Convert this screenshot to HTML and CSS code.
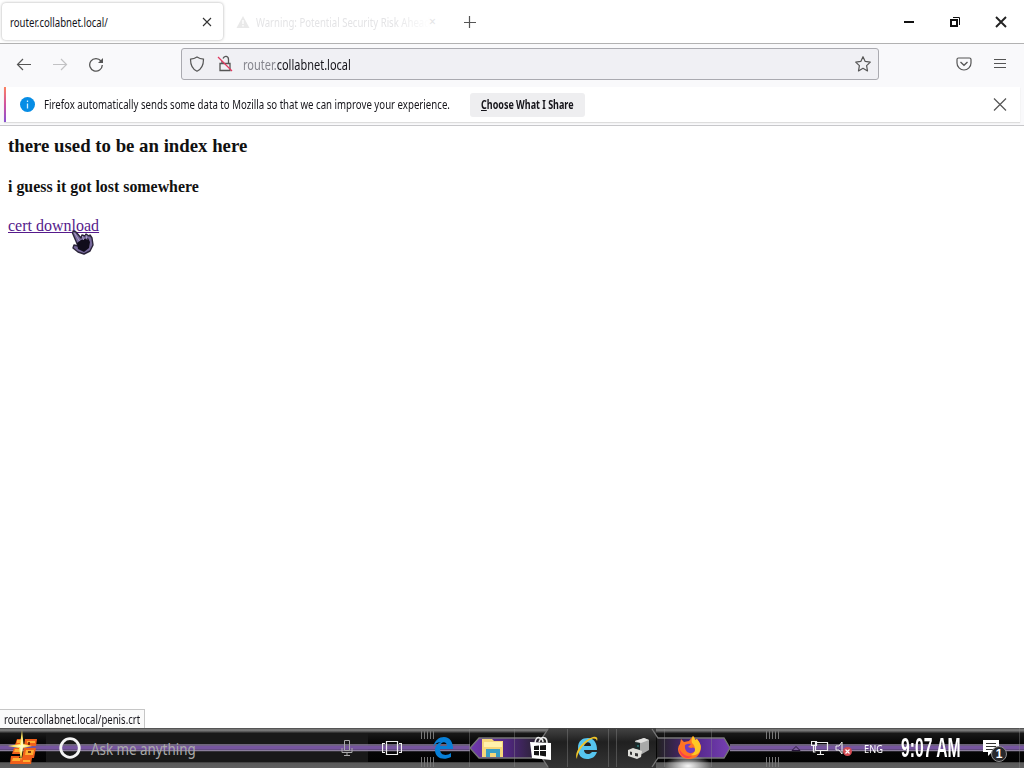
FILE: index.html
```html
<!DOCTYPE html>
<html lang="en">
<head>
<meta charset="utf-8">
<title>router.collabnet.local/</title>
<link rel="stylesheet" href="styles.css">
</head>
<body>
<div class="screen">
  <header class="tabs">
    <div class="tab"><span class="label tab-title">router.collabnet.local/</span>
      <svg class="tab-close" width="10" height="10" viewBox="0 0 10 10"><path d="M1 1l8 8M9 1L1 9" stroke="#333" stroke-width="1.1"/></svg>
    </div>
    <div class="ghost-tab">
      <svg width="14" height="14" viewBox="0 0 14 14"><path d="M7 1L13.5 13H.5z" fill="#e9e9e9"/><path d="M7 5v4M7 10v1.5" stroke="#fff" stroke-width="1.3"/></svg>
      <span class="label ghost-title">Warning: Potential Security Risk Ahead</span><span class="ghost-x">×</span>
    </div>
    <svg class="plus" width="12" height="12" viewBox="0 0 12 12"><path d="M5.5 0v12M0 6.500h12" stroke="#555" stroke-width="1.2"/></svg>
    <div class="window-buttons">
      <svg width="12" height="12" viewBox="0 0 12 12"><path d="M1 6h10" stroke="#111" stroke-width="2"/></svg>
      <svg width="12" height="12" viewBox="0 0 12 12"><path d="M2 4h6v6H2z" fill="none" stroke="#111" stroke-width="2"/><path d="M4 1.5h6.5V9" fill="none" stroke="#111" stroke-width="1"/></svg>
      <svg width="12" height="12" viewBox="0 0 12 12"><path d="M1 1l10 10M11 1L1 11" stroke="#222" stroke-width="1.900"/></svg>
    </div>
  </header>
  <nav class="toolbar">
    <svg class="nav-icon" width="16" height="16" viewBox="0 0 16 16"><path d="M15 8.500H1.500M7 3L1.500 8.500 7 14" fill="none" stroke="#555" stroke-width="1.2"/></svg>
    <svg class="nav-icon" width="16" height="16" viewBox="0 0 16 16"><path d="M1 8.500h13.500M9 3l5.500 5.500L9 14" fill="none" stroke="#c2c2c4" stroke-width="1.2"/></svg>
    <svg class="nav-icon" width="16" height="16" viewBox="0 0 16 16"><path d="M13 5A6.300 6.300 0 1 0 14.300 9" fill="none" stroke="#555" stroke-width="1.3"/><path d="M15 2v5h-5z" fill="#555"/></svg>
    <div class="url">
      <svg width="16" height="16" viewBox="0 0 16 16"><path d="M8 1C6 2.300 3.700 3 1.500 3.200 1.500 8.500 3 13 8 15.200 13 13 14.500 8.500 14.500 3.200 12.300 3 10 2.300 8 1z" fill="none" stroke="#555" stroke-width="1.200"/></svg>
      <svg width="16" height="18" viewBox="0 0 16 18"><path d="M3 8.500h10v7H3zM5 8V6M6 3.500C7.500 0 11.500 1 11.500 4.500V8" fill="none" stroke="#555" stroke-width="1.300"/><path d="M1 2l14 14" stroke="#e2385f" stroke-width="1.300"/></svg>
      <span class="label address"><span class="dim">router.</span>collabnet.local</span>
      <svg class="star" width="18" height="18" viewBox="0 0 18 18"><path d="M9 1.700l2.200 4.700 5.100.7-3.700 3.500.9 5.300L9 13.300l-4.500 2.600.9-5.300L1.700 7.100l5.100-.7z" fill="none" stroke="#555" stroke-width="1.200" stroke-linejoin="round"/></svg>
    </div>
    <svg class="pocket" width="16" height="14" viewBox="0 0 16 14"><path d="M2.500 1h11q1.500 0 1.500 1.500V6a7 7 0 0 1-14 0V2.500Q1 1 2.500 1z" fill="none" stroke="#555" stroke-width="1.200"/><path d="M4.500 5L8 8.300 11.500 5" fill="none" stroke="#555" stroke-width="1.300"/></svg>
    <svg class="menu" width="12" height="12" viewBox="0 0 12 12"><path d="M0 1.500h12M0 5.500h12M0 9.500h12" stroke="#555" stroke-width="1.100"/></svg>
  </nav>
  <section class="notice">
    <div class="notice-body">
      <svg class="info" width="16" height="16" viewBox="0 0 16 16"><circle cx="8.500" cy="7.500" r="7.500" fill="#078de5"/><path d="M8.500 6.500v5M8.500 3.500V5" stroke="#d5efff" stroke-width="1.300"/></svg>
      <span class="label notice-text">Firefox automatically sends some data to Mozilla so that we can improve your experience.</span>
      <button class="choose"><span class="label choose-text"><u>C</u>hoose What I Share</span></button>
      <svg class="notice-close" width="14" height="14" viewBox="0 0 14 14"><path d="M1 .500l12 12M13 .500L1 12.500" stroke="#555" stroke-width="1.200"/></svg>
    </div>
  </section>
  <main class="page">
    <h3>there used to be an index here</h3>
    <h4>i guess it got lost somewhere</h4>
    <a href="#">cert download</a>
    <svg class="cursor" width="24" height="28" viewBox="0 0 24 28"><path d="M1.500 4Q2 1 5 3l5 6 1-3 3 1 1-2 3 2 1-1 2 3 1 7-3 6-6 3-6-2-5-4 1-3 4 1z" fill="#77699c" stroke="#2a2439" stroke-width="1.400" stroke-linejoin="round"/><path d="M6 14l4-3 7-2 2 4-1 6-5 4-6-3z" fill="#100c1b"/><path d="M3.500 4l5 8M11.500 7l1 4M15 6.500l1 4" stroke="#aaa0c7" stroke-width="1"/></svg>
  </main>
  <div class="status"><span class="label status-text">router.collabnet.local/penis.crt</span></div>
  <footer class="taskbar">
    <svg class="skin" width="1024" height="40" viewBox="0 0 1024 40">
      <defs>
        <linearGradient id="edge" x2="0" y2="1"><stop offset="0" stop-color="#454545"/><stop offset=".05" stop-color="#858585"/><stop offset=".1" stop-color="#4a4a4a"/><stop offset=".13" stop-color="#181818"/><stop offset=".35" stop-color="#080808"/><stop offset=".84" stop-color="#030303"/><stop offset=".87" stop-color="#595959"/><stop offset="1" stop-color="#606060"/></linearGradient>
        <linearGradient id="left"><stop offset="0" stop-color="#713aae"/><stop offset=".5" stop-color="#512782"/><stop offset="1" stop-color="#222"/></linearGradient>
        <linearGradient id="right"><stop offset="0" stop-color="#222"/><stop offset=".55" stop-color="#56288d"/><stop offset="1" stop-color="#7640b3"/></linearGradient>
        <linearGradient id="mid" x2="0" y2="1"><stop offset="0" stop-color="#444"/><stop offset=".35" stop-color="#202020"/><stop offset="1" stop-color="#343434"/></linearGradient>
        <radialGradient id="glow"><stop offset="0" stop-color="#fff" stop-opacity=".95"/><stop offset="1" stop-color="#fff" stop-opacity="0"/></radialGradient>
      </defs>
      <path d="M0 0h1024v40H0z" fill="url(#edge)"/>
      <path d="M46 5h322v29H46z" fill="#191919"/>
      <path d="M0 17h470M0 22.500h470M730 17h294M730 22.500h294" stroke="#8b7f9c" stroke-width="1.300"/>
      <path d="M0 19.800h470M730 19.800h294" stroke="#76559f" stroke-width="4"/>
      <path d="M549 0h107v40H549l-7-10V10z" fill="url(#mid)"/>
      <path d="M470 20l9-10h64v20h-64z" fill="url(#left)"/>
      <path d="M657 10h67l6 10-6 10h-67z" fill="url(#right)"/>
      <path d="M548 1l-6 9h-63l-9 10 9 10h63l6 9M652 1l6 9h66l6 10-6 10h-66l-6 9" fill="none" stroke="#777" stroke-width="1.300"/>
      <path d="M469.500 1v38M514.500 1v38M567.500 1v38M608.500 1v38M616.500 1v38M664.500 1v38M711.500 1v38M1019.500 0v40" stroke="#8d8d8d" stroke-opacity=".4"/>
      <path d="M421.500 1v10M424.500 1v10M427.500 1v10M430.500 1v10M433.500 1v10M421.500 29v10M424.500 29v10M427.500 29v10M430.500 29v10M433.500 29v10M766.500 1v10M769.500 1v10M772.500 1v10M775.500 1v10M778.500 1v10M766.500 29v10M769.500 29v10M772.500 29v10M775.500 29v10M778.500 29v10" stroke="#777"/>
      <ellipse cx="688" cy="38" rx="24" ry="11" fill="url(#glow)"/>
    </svg>
    <div class="slot start"><svg width="32" height="36" viewBox="0 0 32 36">
      <path d="M10 9h6l-1 6H8zM18 9h12l-1 7H17zM7 18h8l-1 6H5zM17 18h12l-2 10H15zM4 26h9l-1 2h13l-1 6H3z" fill="#f0601a"/>
      <path d="M10 10h4l-1 3h-3zM20 11h8v2h-8zM8 19h5v3H7zM19 20h8l-1 5h-8zM6 28h7v3H5zM16 30h7v2h-7z" fill="#ffae32"/>
      <path d="M22 12v3M21 22h3" stroke="#541303" stroke-width="1.500"/>
      <path d="M15 0l1.500 14 8.500 2-9 2-2 13-2-13-11-2 12-2z" fill="#ffe55d"/><path d="M15 7l1 8 5 1-5 1-2 7-1-7-6-1 7-1z" fill="#fffbc8"/></svg></div>
    <div class="search">
      <svg width="24" height="24" viewBox="0 0 24 24"><circle cx="12" cy="12" r="9.300" fill="none" stroke="#f4f4f4" stroke-width="2.800"/></svg>
      <span class="label search-text">Ask me anything</span>
      <svg class="mic" width="12" height="18" viewBox="0 0 12 18"><path d="M3.500 1.500h5v10h-5zM1 9v4.500h10V9M6 13.500V17M3 16.500h6" fill="none" stroke="#aaa"/></svg>
    </div>
    <div class="slot view"><svg width="20" height="16" viewBox="0 0 20 16"><path d="M4.500 1.500h11v13h-11zM3 3.500H.500v9H3M17 3.500h2.500v9H17" fill="none" stroke="#eee" stroke-width="1.200"/></svg></div>
    <div class="slot edge"><svg width="22" height="22" viewBox="0 0 22 22"><path d="M1 10C3 3 7 0 12 0c6 0 9 5 9 12H8c0 7 7 7 11 4v4C11 24 3 21 3 13c0-4 3-7 6-8-4 0-7 3-8 5zM8 9h7c0-5-6-5-7 0z" fill="#087fd7"/></svg></div>
    <div class="slot files"><svg width="24" height="22" viewBox="0 0 24 22"><path d="M1 2h10l2 2h9v16H1z" fill="#f6d77b"/><path d="M3 5h18v5H3z" fill="#fff0ac"/><path d="M5 20v-8h14v8h-4v-4H9v4z" fill="#399ec5"/></svg></div>
    <div class="slot store"><svg width="22" height="26" viewBox="0 0 22 26"><path d="M5 8Q6 1 10 3q3 1 3 4M9 7q2-6 6-4 2 1 2 5" fill="none" stroke="#eee" stroke-width="1.500"/><path d="M0 7l21 1v17L2 23z" fill="#fff"/><path d="M4 11l5-.5V15H4zM10 10.500l6-.5v5h-6zM4 16h5v4.500L4 20zM10 16h6v5.500l-6-1z" fill="#151515"/></svg></div>
    <div class="slot ie"><svg width="26" height="26" viewBox="0 0 26 26"><path d="M4 13C4 6 8 3 14 3c6 0 9 5 9 12H10c0 5 6 5 8 2h5c-2 5-5 7-10 7-6 0-9-4-9-11zm6-2h7c0-5-6-5-7 0z" fill="#56c5ef"/><path d="M3 24C-1 18 9 5 19 2c4-1 5 1 4 4C22 2 17 3 12 8 6 13 3 20 3 24z" fill="#f0c629"/></svg></div>
    <div class="slot device"><svg width="24" height="24" viewBox="0 0 24 24"><path d="M8 5l9-3 5 2v10l-7 4-7-3z" fill="#a9aaa9"/><path d="M8 5l9-3 5 2-8 3z" fill="#e1e1df"/><path d="M8 6l5 1v7l-5-1z" fill="#1b2929"/><path d="M1 14l5-2 6 2 3 1-1 6-4 2-9-3z" fill="#deded9"/><path d="M3 15.500l2 .5v3l-2-.5zM8 17l3 .5v3L8 20z" fill="#333"/><path d="M10 10h2" stroke="#3aa6a4"/></svg></div>
    <div class="slot fox"><svg width="24" height="24" viewBox="0 0 24 24"><path d="M2 8l1-5 3 3 5-1 4-5q2 2 2 4l2-1c3 4 5 7 3 13-2 5-6 7-11 7C4 23 0 18 0 13q0-3 2-5z" fill="#ff7425"/><path d="M15 0q2 2 2 4l2-1c3 4 5 7 3 12-2 4-6 5-9 4 5-2 5-9 1-12-1-3 0-5 1-7z" fill="#ffc925"/><path d="M7 9q3-2 6-1l-3 3 3 1c4-2 5 2 3 4-4 3-10 0-9-7z" fill="#713cc1"/><path d="M1 12c3 7 8 9 13 8-5 5-13 0-13-8z" fill="#fb3d4d"/></svg></div>
    <div class="tray">
      <svg class="chevron" width="10" height="8" viewBox="0 0 10 8"><path d="M1 6.500l4-4 4 4z" fill="#7b5c9c" stroke="#27153a"/></svg>
      <svg class="network" width="18" height="16" viewBox="0 0 18 16"><path d="M4.500 2.500h12v8h-12zM9.500 11v3M6 14.500h7M.500 1.500h5v4h-5zM2.500 6v6h2" fill="none" stroke="#eee" stroke-width="1.200"/></svg>
      <svg class="volume" width="18" height="17" viewBox="0 0 18 17"><path d="M1 6h3l3-4v12l-3-4H1z" fill="none" stroke="#eee"/><circle cx="12.500" cy="11.500" r="4.500" fill="#d44b53"/><path d="M10.500 9.500l4 4M14.500 9.500l-4 4" stroke="#fff" stroke-width="1.200"/></svg>
      <span class="label lang">ENG</span>
      <span class="label clock">9:07 AM</span>
      <div class="messages"><svg width="18" height="18" viewBox="0 0 18 18"><path d="M0 1h16v12H9l-4 4v-4H0z" fill="#fff"/><path d="M3 4.500h10M3 7.500h10M3 10.500h7" stroke="#333"/></svg><span class="badge">1</span></div>
    </div>
  </footer>
</div>
</body>
</html>
```
FILE: styles.css
```css
* { box-sizing: border-box; }
body { margin: 0; background: #fff; }
svg { display: block; flex: none; }
.screen { width: 1024px; height: 768px; display: flex; flex-direction: column; overflow: hidden; position: relative; font-family: "Noto Sans", sans-serif; color: #15141a; }
.label { display: block; flex: none; white-space: nowrap; transform-origin: left center; }
.tabs { height: 44px; flex: none; display: flex; align-items: center; border-bottom: 1px solid #b2b2b2; padding-left: 2px; }
.tab { width: 221px; height: 37px; flex: none; display: flex; align-items: center; padding-left: 8px; border-radius: 4px; box-shadow: 0 0 3px #aaa; }
.tab-title { width: 192px; font-size: 12px; transform: translateY(1px) scaleX(.8); }
.ghost-tab { width: 216px; margin-left: 13px; display: flex; align-items: center; gap: 6px; font-size: 12px; color: #e4e4e6; }
.ghost-title { width: 218px; margin-right: -54px; transform: translateY(1px) scaleX(.8); -webkit-mask-image: linear-gradient(90deg, #000 80%, transparent); mask-image: linear-gradient(90deg, #000 80%, transparent); }
.ghost-x { margin-left: 3px; }
.plus { margin-left: 12px; }
.window-buttons { margin-left: auto; display: flex; gap: 34px; padding-right: 17px; }
.toolbar { height: 42px; flex: none; background: #f9f9fb; display: flex; align-items: center; padding: 0 18px 2px 16px; }
.nav-icon { margin-right: 20px; }
.url { width: 698px; height: 32px; margin-left: 57px; display: flex; align-items: center; border: 1px solid #aaaab0; border-radius: 3px; background: #f0f0f4; padding-left: 7px; }
.url svg + svg { margin-left: 12px; }
.address { width: 120px; margin-left: 10px; font-size: 14px; transform: scaleX(.785); }
.dim { color: #85858d; }
.url .star { margin-left: auto; margin-right: 6px; }
.pocket { margin-left: 77px; }
.menu { margin-left: auto; }
.notice { height: 40px; flex: none; background: #f9f9fb; border-bottom: 1px solid #c8c8cb; padding: 1px 4px 3px; }
.notice-body { height: 35px; display: flex; align-items: center; background: #fff; border-left: 2px solid; border-image: linear-gradient(#ff855c, #d052a0, #8452d4) 1; box-shadow: 0 1px 1px #ddd; }
.info { margin-left: 13px; }
.notice-text { width: 426px; margin-left: 9px; font-size: 12px; transform: scaleX(.805); }
.choose { width: 115px; height: 24px; padding: 0 11px; border: 0; border-radius: 3px; background: #eeeef0; color: #15141a; font: bold 12px "Noto Sans", sans-serif; }
.choose-text { transform: scaleX(.75); }
.notice-close { margin-left: auto; margin-right: 13px; }
.page { flex: 1; position: relative; padding: 9px 8px; font: 16px "Liberation Serif", serif; color: #111; }
h3 { font-size: 18.8px; line-height: 22px; margin: 0 0 21px; }
h4 { font-size: 15.9px; line-height: 18px; margin: 0 0 21px; }
.page a { color: #551a8b; text-decoration: underline; }
.cursor { position: absolute; left: 71px; top: 103px; }
.status { position: absolute; left: 0; top: 709px; width: 145px; height: 19px; padding-left: 4px; border: solid #c6c6c6; border-width: 1px 1px 0 0; background: #fafafa; font-size: 12px; line-height: 19px; }
.status-text { transform: scaleX(.797); }
.taskbar { height: 40px; flex: none; position: relative; display: flex; align-items: center; }
.skin { position: absolute; inset: 0; }
.slot, .search, .tray { position: relative; flex: none; }
.slot { width: 49px; display: flex; justify-content: center; }
.start { width: 46px; }
.search { width: 322px; display: flex; align-items: center; padding-left: 12px; color: #aaa; font-size: 16px; }
.search-text { width: 250px; margin-left: 9px; transform: translateY(1px) scaleX(.835); }
.view { width: 48px; }
.edge { width: 53px; }
.files { width: 47px; }
.store { width: 49px; }
.ie { width: 46px; margin-left: -1px; }
.device { width: 56px; margin-left: 1px; }
.fox { width: 46px; }
.tray { flex: 1; height: 40px; display: flex; align-items: center; color: #fff; }
.chevron { margin-left: 78px; }
.network { margin-left: 10px; }
.volume { margin-left: 6px; }
.lang { width: 37px; margin-left: 11px; font-size: 11px; transform: scaleX(.84); }
.clock { width: 60px; font: bold 28px/32px "Liberation Sans", sans-serif; transform: scaleX(.56); }
.messages { margin-left: 22px; position: relative; }
.badge { position: absolute; left: 8px; top: 7px; width: 16px; height: 16px; border: 1px solid #8e8e8e; border-radius: 50%; background: #28282c; text-align: center; font: bold 12px/14px "Liberation Sans", sans-serif; }
```
